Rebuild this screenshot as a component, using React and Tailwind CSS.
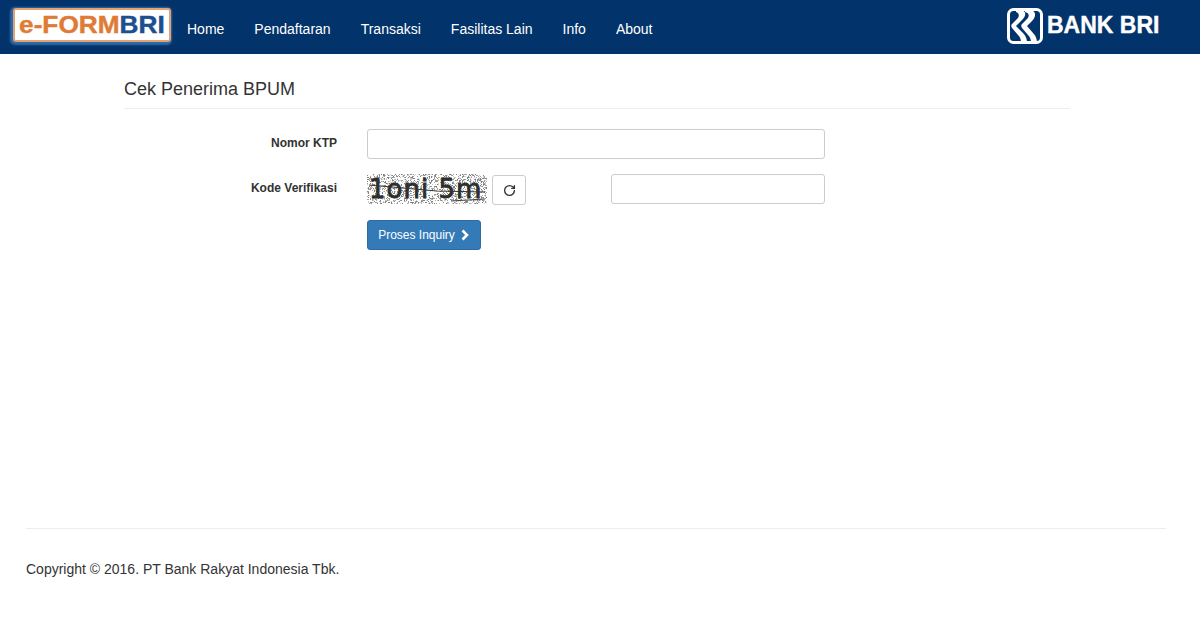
import React from "react";
import { RotateCw } from "lucide-react";

const navItems = ["Home", "Pendaftaran", "Transaksi", "Fasilitas Lain", "Info", "About"];

const noise = [];
let seed = 7;
for (let y = 0; y < 30; y++) {
  for (let x = 0; x < 120; x++) {
    seed = (seed * 16807) % 2147483647;
    if (seed % 100 < 38) noise.push([x, y, seed % 3]);
  }
}

const Captcha = () => (
  <div className="relative h-[30px] w-[120px] bg-white">
    <svg width="120" height="30" className="absolute inset-0">
      {noise.map(([x, y, k]) => (
        <rect key={x + "-" + y} x={x} y={y} width="1" height="1" fill={k === 0 ? "#808080" : k === 1 ? "#a0a0a0" : "#cbcbcb"} />
      ))}
    </svg>
    <span className="absolute left-[2px] top-0 whitespace-nowrap font-['DejaVu_Sans',sans-serif] text-[26px] leading-[30px] tracking-[1px] text-[#2e2e2e] [-webkit-text-stroke:0.8px_#2e2e2e]">
      1oni 5m
    </span>
    <svg width="120" height="30" className="absolute inset-0">
      <path d="M2 11 L70 17 L118 18" stroke="#333" strokeWidth="1.2" fill="none" />
      <path d="M84 27 L118 25" stroke="#444" strokeWidth="1" fill="none" />
    </svg>
  </div>
);

const BriMark = () => (
  <svg width="36" height="36" viewBox="0 0 36 36" fill="none">
    <rect x="1.5" y="1.5" width="33" height="33" rx="5" stroke="#fff" strokeWidth="3" />
    <path d="M9 2 H14 C20 3 19 8 15 12 L9 18 L16 25 C19 28 20 31 20 35 H14 C14 31 13 29 11 27 L5 20 C4 18 4 17 5 16 L10 11 C13 8 12 5 9 4 Z" fill="#fff" />
    <path d="M18 2 H23 C30 3 29 9 25 13 L20 18 L26 25 C29 28 30 31 30 35 H24 C24 31 23 29 21 27 L15 20 C14 18 14 17 15 16 L20 11 C23 8 22 5 18 4 Z" fill="#fff" />
  </svg>
);

export default function App() {
  return (
    <div className="min-h-[619px] bg-white font-['Liberation_Sans',Arial,sans-serif] text-[#333]">
      <nav className="flex h-[54px] items-center bg-[#02336a] pl-[13px] pr-[40px]">
        <div className="-mt-[4px] flex h-[34px] w-[158px] items-center justify-center rounded-[3px] border-2 border-[#e3a273] bg-white shadow-[-1px_1px_2px_2px_#2f6aa8]">
          <span className="scale-x-[1.14] whitespace-nowrap text-[23px] font-bold leading-none text-[#e07b35] [-webkit-text-stroke:0.4px_#e07b35]">
            e-FORM<span className="text-[#1c4f8f] [-webkit-text-stroke:0.4px_#1c4f8f]">BRI</span>
          </span>
        </div>
        <ul className="ml-[16px] flex gap-[30px] pt-[4px] text-[14px] text-white">
          {navItems.map((item) => (
            <li key={item}>{item}</li>
          ))}
        </ul>
        <div className="-mt-[3px] ml-auto flex items-center gap-[4px]">
          <BriMark />
          <span className="w-[113px] whitespace-nowrap text-[23px] font-bold leading-none text-white [-webkit-text-stroke:0.4px_#fff]">
            BANK BRI
          </span>
        </div>
      </nav>

      <main className="ml-[124px] w-[946px] pt-[24px]">
        <h1 className="border-b border-[#eee] pb-[7px] text-[18px] font-normal leading-[23px]">Cek Penerima BPUM</h1>
        <form className="mt-[20px] flex flex-col gap-[15px]">
          <div className="flex items-center">
            <label className="w-[213px] pb-[2px] text-right text-[12px] font-bold">Nomor KTP</label>
            <input className="ml-[30px] h-[30px] w-[458px] rounded-[3px] border border-[#ccc] bg-white" />
          </div>
          <div className="flex h-[31px] items-start">
            <label className="w-[213px] pt-[5px] text-right text-[12px] font-bold">Kode Verifikasi</label>
            <div className="ml-[30px] flex w-[458px] items-start">
              <Captcha />
              <button type="button" className="ml-[5px] mt-[1px] flex h-[30px] w-[34px] items-center justify-center rounded-[3px] border border-[#ccc] bg-white text-[#333]">
                <RotateCw size={13} strokeWidth={2.5} />
              </button>
              <input className="ml-auto h-[30px] w-[214px] rounded-[3px] border border-[#ccc] bg-white" />
            </div>
          </div>
          <div className="pl-[243px]">
            <button type="button" className="flex h-[30px] w-[114px] items-center justify-center gap-[5px] rounded-[3px] border border-[#2e6da4] bg-[#337ab7] text-[12px] text-white">
              Proses Inquiry
              <svg width="10" height="12" viewBox="0 0 10 12" fill="none">
                <path d="M2.5 1.5 L7 6 L2.5 10.5" stroke="#fff" strokeWidth="2.6" />
              </svg>
            </button>
          </div>
        </form>
      </main>

      <footer className="ml-[26px] mr-[34px] mt-[278px] border-t border-[#eee] pt-[30px] text-[14px] leading-[20px]">
        Copyright © 2016. PT Bank Rakyat Indonesia Tbk.
      </footer>
    </div>
  );
}
